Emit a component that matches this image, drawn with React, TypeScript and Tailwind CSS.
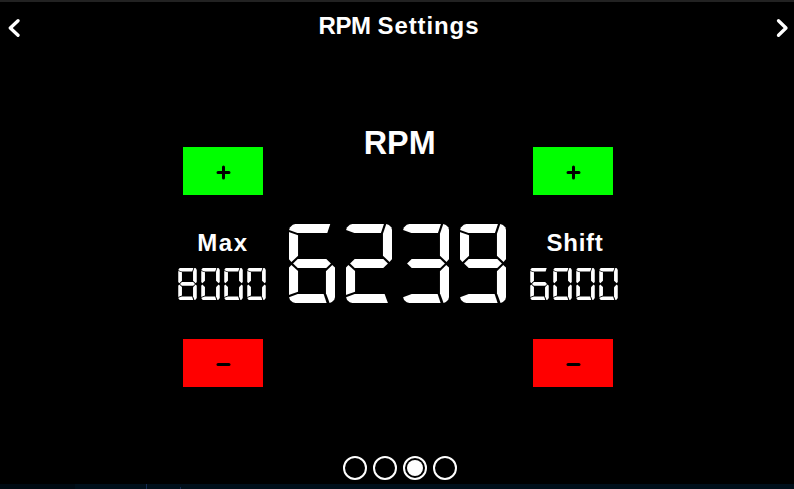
type Point = [number, number];
type SegmentName = 'a' | 'b' | 'c' | 'd' | 'e' | 'f' | 'g' | 'aLong' | 'dLong';

// Segment outlines on a 140 x 237 grid.
const SEGMENTS: Record<SegmentName, Point[]> = {
  a: [[1, 18], [4, 10], [12, 2], [20, 0], [115, 0], [106, 27], [26, 27]],
  aLong: [[1, 18], [4, 10], [12, 2], [20, 0], [125, 0], [116, 27], [26, 27]],
  b: [[122, 0], [130, 3], [137, 10], [140, 20], [140, 104], [132, 114], [112, 95], [112, 29]],
  c: [[131, 123], [140, 131], [140, 217], [137, 227], [130, 234], [123, 237], [112, 208], [112, 142]],
  d: [[1, 220], [27, 210], [105, 210], [114, 237], [20, 237], [12, 235], [4, 228]],
  dLong: [[1, 220], [27, 210], [117, 210], [127, 237], [20, 237], [12, 235], [4, 228]],
  e: [[0, 131], [8, 123], [28, 141], [28, 203], [0, 213]],
  f: [[0, 24], [28, 34], [28, 95], [8, 114], [0, 105]],
  g: [[13, 118.5], [27, 105], [113, 105], [127, 118.5], [113, 132], [27, 132]],
};

const DIGITS: Record<string, SegmentName[]> = {
  '0': ['a', 'b', 'c', 'd', 'e', 'f'],
  '1': ['b', 'c'],
  '2': ['a', 'b', 'g', 'e', 'dLong'],
  '3': ['a', 'b', 'g', 'c', 'd'],
  '4': ['f', 'g', 'b', 'c'],
  '5': ['aLong', 'f', 'g', 'c', 'd'],
  '6': ['aLong', 'f', 'g', 'e', 'c', 'd'],
  '7': ['a', 'b', 'c'],
  '8': ['a', 'b', 'c', 'd', 'e', 'f', 'g'],
  '9': ['a', 'b', 'c', 'd', 'f', 'g'],
};

const clip = (points: Point[]) =>
  `polygon(${points.map(([x, y]) => `${(x / 140) * 100}% ${(y / 237) * 100}%`).join(',')})`;

function SegmentDisplay({ value, large = false }: { value: number; large?: boolean }) {
  return (
    <div role="img" aria-label={String(value)} className={large ? 'flex gap-[10.5px]' : 'flex gap-[4.5px]'}>
      {String(value).split('').map((digit, i) => (
        <div key={i} className={large ? 'grid h-[79px] w-[46.5px]' : 'grid h-[32.5px] w-[18.5px]'}>
          {DIGITS[digit].map((name) => (
            <span
              key={name}
              className="col-start-1 row-start-1 bg-white"
              style={{ clipPath: clip(SEGMENTS[name]) }}
            />
          ))}
        </div>
      ))}
    </div>
  );
}

function StepButton({ kind }: { kind: 'plus' | 'minus' }) {
  return (
    <button
      aria-label={kind}
      className={`flex h-12 w-20 items-start pt-[18px] pl-[33px] ${kind === 'plus' ? 'bg-[#00ff00]' : 'bg-[#ff0000]'}`}
    >
      <svg width="15" height="15" viewBox="0 0 15 15" stroke="black" strokeWidth="3" strokeLinecap="round">
        <path d={kind === 'plus' ? 'M2 7.5H13M7.5 2V13' : 'M2 7.5H13'} />
      </svg>
    </button>
  );
}

function Control({ side, label, value }: { side: 'left' | 'right'; label: string; value: number }) {
  const left = side === 'left';
  return (
    <div className="flex w-[90px] flex-col items-center">
      <StepButton kind="plus" />
      <div
        className={`mt-[34px] h-7 text-2xl leading-7 font-bold ${left ? 'tracking-[1.6px]' : 'pl-[4px] tracking-[0.7px]'}`}
      >
        {label}
      </div>
      <div className={`mt-[10.7px] h-[33px] ${left ? 'pr-[2px]' : 'pl-[2px]'}`}>
        <SegmentDisplay value={value} />
      </div>
      <div className="mt-[38.3px]">
        <StepButton kind="minus" />
      </div>
    </div>
  );
}

function Chevron({ right = false }: { right?: boolean }) {
  return (
    <svg
      width="13"
      height="20"
      viewBox="0 0 13 20"
      fill="none"
      stroke="white"
      strokeWidth="3.3"
      strokeLinecap="round"
      strokeLinejoin="round"
      className="mt-[16px]"
    >
      <path d={right ? 'M2.5 2.7L10 10L2.5 17.3' : 'M11 2.7L3.3 10L11 17.3'} />
    </svg>
  );
}

export default function App() {
  return (
    <div className="flex h-[489px] w-[794px] flex-col overflow-hidden bg-black font-['Liberation_Sans',sans-serif] text-white">
      <div className="h-[2px] shrink-0 bg-[#222222]" />
      <header className="flex h-[58px] shrink-0 justify-between pr-[5px] pl-[7px]">
        <Chevron />
        <h1 className="mt-[10px] ml-[2px] text-2xl leading-7 font-bold tracking-[0.9px] [word-spacing:-0.7px]">
          <span className="tracking-[-0.4px]">RPM</span> Settings
        </h1>
        <Chevron right />
      </header>
      <main className="flex h-[327px] shrink-0 pt-[87px] pl-[178px]">
        <Control side="left" label="Max" value={8000} />
        <section className="ml-[20px] flex w-[219px] flex-col items-center">
          <h2 className="-mt-[25px] h-10 scale-x-95 pl-[4px] text-[34px] leading-10 font-bold">RPM</h2>
          <div className="mt-[62px]">
            <SegmentDisplay value={6239} large />
          </div>
        </section>
        <div className="ml-[21px]">
          <Control side="right" label="Shift" value={6000} />
        </div>
      </main>
      <nav className="flex h-[97px] shrink-0 gap-[6px] pt-[69px] pl-[343px]">
        {[0, 1, 2, 3].map((page) => (
          <span key={page} className="flex size-6 items-center justify-center rounded-full border-2 border-white">
            {page === 2 && <span className="size-4 rounded-full bg-white" />}
          </span>
        ))}
      </nav>
      <footer className="flex h-[5px] shrink-0 items-end bg-[#000f1a]">
        <div className="h-full w-[75px] bg-[#000a12]" />
        <div className="ml-[71px] h-full w-px bg-[#172b50]" />
        <div className="ml-[33px] h-[2px] w-px bg-[#172b50]" />
      </footer>
    </div>
  );
}
